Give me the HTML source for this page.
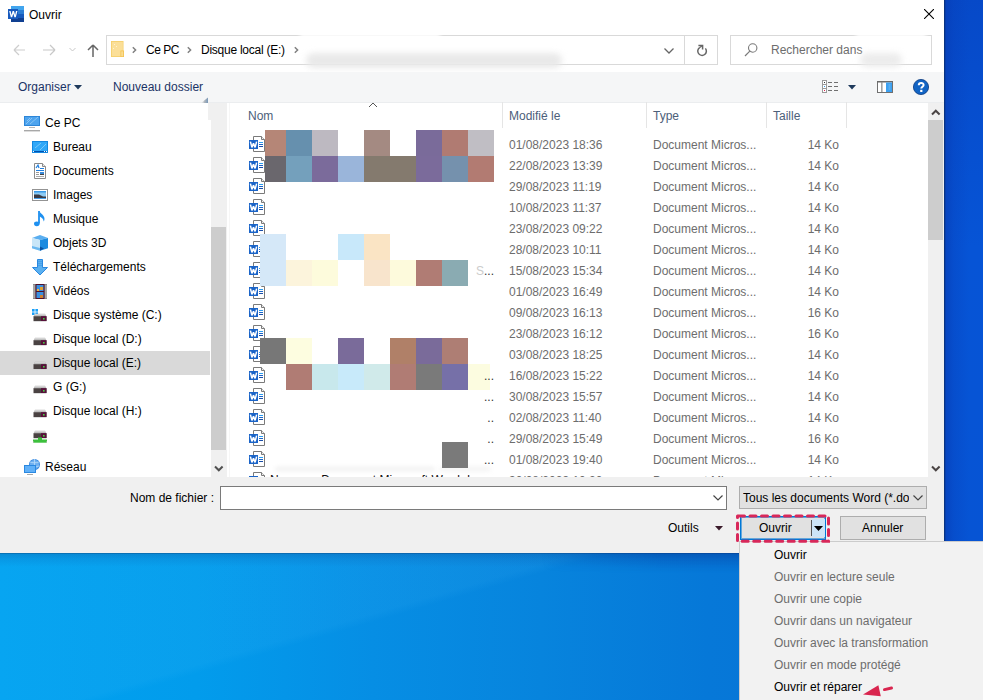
<!DOCTYPE html>
<html><head><meta charset="utf-8">
<style>
*{margin:0;padding:0;box-sizing:border-box}
html,body{width:983px;height:700px;overflow:hidden;font-family:"Liberation Sans",sans-serif;font-size:12px;color:#000}
body{position:relative;background:#0a4fd0}
.abs{position:absolute}
#desk{left:0;top:553px;width:983px;height:147px;background:linear-gradient(180deg,rgba(10,40,90,.6) 0,rgba(10,50,120,.22) 1px,rgba(10,60,140,.12) 6px,rgba(0,0,0,0) 14px),linear-gradient(163.7deg,rgba(90,200,255,.08) 0%,rgba(90,200,255,.08) 39%,rgba(0,0,0,0) 41%),linear-gradient(90deg,#00a2f0 0%,#029cec 20%,#068ee4 38%,#0784dd 55%,#0678d8 72%,#0670d4 100%)}
#desktop2{left:540px;top:553px;width:443px;height:30px;background:linear-gradient(180deg,rgba(0,20,140,.18) 0,rgba(0,20,140,0) 20px);-webkit-mask-image:linear-gradient(90deg,transparent 0,#000 120px)}
#deskr{left:944px;top:0;width:39px;height:553px;background:linear-gradient(90deg,#0a2f70 0,rgba(8,60,180,.6) 2px,rgba(8,60,180,.25) 10px,rgba(8,60,180,0) 25px),linear-gradient(175deg,#0649c8 0%,#0654d6 45%,#0654d4 100%)}
#dlg{left:0;top:0;width:944px;height:553px;background:#fff;overflow:hidden}
.t{position:absolute;white-space:nowrap;line-height:14px}
#toolbar{left:0;top:72px;width:944px;height:31px;background:#f5f6f7;border-bottom:1px solid #ebedef}
#bottom{left:0;top:477px;width:944px;height:76px;background:#f0f0f0}
.nv{position:absolute;white-space:nowrap;line-height:14px;color:#000}
.d{position:absolute;left:509px;color:#6d6d6d;white-space:nowrap;line-height:14px}
.ty{position:absolute;left:653px;color:#6d6d6d;white-space:nowrap;line-height:14px}
.sz{position:absolute;left:770px;width:69px;text-align:right;color:#6d6d6d;white-space:nowrap;line-height:14px}
.hd{position:absolute;top:109px;color:#4c607a;white-space:nowrap;line-height:14px}
.sep{position:absolute;top:102px;width:1px;height:26px;background:#e5e5e5}
.mi{position:absolute;left:774px;white-space:nowrap;line-height:14px;color:#6d6d6d}
.wi{position:absolute;left:249px}
.mb{position:absolute;width:26px;height:26px}
</style></head><body>
<div id="desk" class="abs"></div>
<div id="deskr" class="abs"></div>
<div id="desktop2" class="abs"></div>
<svg width="0" height="0" style="position:absolute"><defs><g id="wicon">
<path d="M4.5 0.5h8l3 3v12h-11z" fill="#fff" stroke="#7a7a7a"/>
<path d="M12.5 0.5v3h3" fill="#eee" stroke="#7a7a7a"/>
<rect x="0" y="4" width="9" height="9" fill="#1a64c8"/>
<path d="M1.4 5.6L2.9 11.4L4.5 7.4L6.1 11.4L7.6 5.6" stroke="#fff" stroke-width="1.5" fill="none" stroke-linejoin="miter" stroke-miterlimit="2"/>
<rect x="10" y="6" width="4" height="1" fill="#2b9cf0"/>
<rect x="10" y="8" width="4" height="1" fill="#1a64c8"/>
<rect x="10" y="10" width="4" height="1" fill="#1a4ea8"/>
</g></defs></svg>
<div id="dlg" class="abs">
  <!-- title -->
  <svg class="abs" style="left:0;top:0" width="30" height="30">
    <rect x="11" y="6" width="13" height="4" fill="#41a5ee"/>
    <rect x="11" y="10" width="13" height="4" fill="#2b7cd3"/>
    <rect x="11" y="14" width="13" height="4" fill="#185abd"/>
    <rect x="11" y="18" width="13" height="4" fill="#103f91"/>
    <rect x="8" y="9" width="10" height="10" fill="#185abd"/>
    <path d="M9.2 11l1.6 6.2h1.4l1.1-3.8 1.1 3.8h1.4l1.6-6.2h-1.4l-0.9 3.9-1.1-3.9h-1.4l-1.1 3.9-0.9-3.9z" fill="#fff"/>
  </svg>
  <div class="t" style="left:29px;top:8px">Ouvrir</div>
  <svg class="abs" style="left:924px;top:9px" width="10" height="10"><path d="M0 0L10 10M10 0L0 10" stroke="#000" stroke-width="1.1"/></svg>

  <!-- nav buttons -->
  <svg class="abs" style="left:10px;top:42px" width="95" height="18">
    <path d="M4 8h11M4 8l5-5M4 8l5 5" stroke="#cdcdcd" stroke-width="1.2" fill="none"/>
    <path d="M33 8h12M45 8l-5-5M45 8l-5 5" stroke="#c8c8c8" stroke-width="1.2" fill="none"/>
    <path d="M59.5 6l3 3 3-3" stroke="#c8c8c8" stroke-width="1" fill="none"/>
    <path d="M83 3v12M83 3l-5 5M83 3l5 5" stroke="#666" stroke-width="1.5" fill="none"/>
  </svg>
  <!-- address box -->
  <div class="abs" style="left:106px;top:35px;width:612px;height:30px;border:1px solid #d9d9d9"></div>
  <div class="abs" style="left:684px;top:35px;width:1px;height:30px;background:#d9d9d9"></div>
  <svg class="abs" style="left:111px;top:41px" width="14" height="16"><rect x="0" y="0" width="12.5" height="16" fill="#f6cf6a"/><rect x="0.8" y="0.8" width="11" height="14.4" fill="#fbdf98"/><rect x="9.5" y="9.5" width="3.5" height="6.5" fill="#f3c24e"/><rect x="10.2" y="10.3" width="2" height="5" fill="#fbdc90"/><rect x="3" y="3" width="1" height="1" fill="#fff3d0"/><rect x="5" y="5" width="1" height="1" fill="#fff3d0"/><rect x="2" y="7" width="1" height="1" fill="#fff3d0"/></svg>
  <svg class="abs" style="left:130px;top:45px" width="170" height="10">
    <path d="M2.8 2.2l2.8 2.8-2.8 2.8" stroke="#808080" stroke-width="1.5" fill="none"/>
    <path d="M57.8 2.2l2.8 2.8-2.8 2.8" stroke="#808080" stroke-width="1.5" fill="none"/>
    <path d="M164.8 2.2l2.8 2.8-2.8 2.8" stroke="#808080" stroke-width="1.5" fill="none"/>
  </svg>
  <div class="t" style="left:146px;top:43px;letter-spacing:-0.5px">Ce PC</div>
  <div class="t" style="left:201px;top:43px;letter-spacing:-0.25px">Disque local (E:)</div>
  <div class="abs" style="left:300px;top:33px;width:140px;height:6px;background:#fff;filter:blur(2px)"></div><div class="abs" style="left:306px;top:53px;width:256px;height:15px;border-radius:8px;background:#e9e9e9;filter:blur(3px)"></div>
  <svg class="abs" style="left:663px;top:47px" width="12" height="8"><path d="M1.5 1.5l4.5 4.5 4.5-4.5" stroke="#666" stroke-width="1.3" fill="none"/></svg>
  <svg class="abs" style="left:696px;top:44px" width="13" height="13"><path d="M3.6 3.6A4.3 4.3 0 1 0 9.4 4.4" stroke="#666" stroke-width="1.5" fill="none"/><path d="M2.4 1.5H6.6V5.6" stroke="#666" stroke-width="1.5" fill="none"/><path d="M3.4 3.8L6.2 1.8" stroke="#666" stroke-width="1.2"/></svg>
  <!-- search -->
  <div class="abs" style="left:730px;top:35px;width:202px;height:30px;border:1px solid #d9d9d9"></div>
  <svg class="abs" style="left:744px;top:42px" width="14" height="15"><circle cx="8.7" cy="6" r="4.2" stroke="#7a7a7a" stroke-width="1.1" fill="none"/><path d="M5.8 9.2L1 14" stroke="#7a7a7a" stroke-width="1.2"/></svg>
  <div class="t" style="left:771px;top:43px;color:#6d6d6d">Rechercher dans</div>
  <div class="abs" style="left:856px;top:33px;width:70px;height:6px;background:#fff;filter:blur(2px)"></div><div class="abs" style="left:860px;top:53px;width:42px;height:14px;border-radius:7px;background:#ececec;filter:blur(3px)"></div>

  <!-- toolbar -->
  <div id="toolbar" class="abs"></div>
  <div class="t" style="left:18px;top:80px;color:#1a3366">Organiser</div>
  <svg class="abs" style="left:74px;top:85px" width="9" height="6"><path d="M0 0h8l-4 4.5z" fill="#1e395b"/></svg>
  <div class="t" style="left:113px;top:80px;color:#1a3366">Nouveau dossier</div>
  <!-- view icon -->
  <svg class="abs" style="left:822px;top:80px" width="17" height="13">
    <rect x="0.5" y="0.5" width="4" height="12" fill="#fff" stroke="#9a9a9a"/>
    <path d="M0.5 4.5h4M0.5 8.5h4" stroke="#9a9a9a"/>
    <rect x="2" y="2" width="1" height="1" fill="#333"/>
    <rect x="2" y="6" width="1" height="1" fill="#2f9ae8"/>
    <rect x="2" y="10" width="1" height="1" fill="#e02050"/>
    <path d="M6 2.5h4M12 2.5h4M6 6.5h4M12 6.5h4M6 10.5h4M12 10.5h4" stroke="#707070" stroke-width="1"/>
  </svg>
  <svg class="abs" style="left:848px;top:85px" width="9" height="6"><path d="M0 0h8l-4 4.5z" fill="#1e395b"/></svg>
  <svg class="abs" style="left:877px;top:81px" width="16" height="12">
    <rect x="0.5" y="0.5" width="15" height="11" fill="#fff" stroke="#707070"/>
    <rect x="0" y="0" width="16" height="1.5" fill="#6a6a6a"/>
    <rect x="4.2" y="1" width="1.3" height="10" fill="#909090"/>
    <rect x="9" y="1.5" width="6" height="9.5" fill="#3ca0f0"/>
    <path d="M11.5 4h2M11.5 6h2M11.5 8h2" stroke="#8cc8f8" stroke-width="0.7"/>
  </svg>
  <svg class="abs" style="left:913px;top:79px" width="16" height="16"><circle cx="8" cy="8" r="7.6" fill="#1264c4" stroke="#0a3a80" stroke-width="0.8"/><path d="M5.8 6.2C5.8 3.2 10.6 3.2 10.6 6C10.6 7.6 8.3 7.9 8.3 9.6" stroke="#fff" stroke-width="2" fill="none"/><rect x="7.2" y="10.8" width="2.2" height="2.2" fill="#fff"/></svg>

  <!-- nav pane -->
  <div class="abs" style="left:211px;top:103px;width:16px;height:374px;background:#f0f0f0"></div><div class="abs" style="left:208px;top:103px;width:19px;height:17px;background:#f0f0f0"></div><div class="abs" style="left:229px;top:103px;width:1px;height:374px;background:#f6f6f6"></div><svg class="abs" style="left:198px;top:94px" width="12" height="10"><defs><linearGradient id="ag" x1="0" y1="0" x2="1" y2="0"><stop offset="0" stop-color="#d8d8d8" stop-opacity="0"/><stop offset="0.5" stop-color="#a0a8b0"/><stop offset="1" stop-color="#5a80a8"/></linearGradient></defs><path d="M3 9L10 3.5V9z" fill="url(#ag)" opacity="0.8"/></svg>
  <div class="abs" style="left:211px;top:227px;width:15px;height:223px;background:#cdcdcd"></div>
  <svg class="abs" style="left:214px;top:465px" width="10" height="8"><path d="M1 1.5l3.8 3.8 3.8-3.8" stroke="#505050" stroke-width="2" fill="none"/></svg>
  <div class="abs" style="left:0;top:351px;width:210px;height:24px;background:#d9d9d9"></div>

  <svg class="abs" style="left:0;top:102px" width="210" height="375" viewBox="0 102 210 375">
<defs>
 <g id="drv">
  <path d="M1.5 3.4L3 0.8h10l1.5 2.6z" fill="#bdbdbd"/><path d="M3 1.6h10" stroke="#dedede" stroke-width="0.8"/>
  <rect x="1.5" y="3.2" width="13" height="4.8" fill="#4a4242"/>
  <rect x="9" y="3.2" width="5.5" height="4.8" fill="#58103a"/>
  <rect x="11" y="5" width="1.6" height="1.6" fill="#44d044"/>
  <rect x="1.5" y="8" width="13" height="0.6" fill="#c8c8c8"/>
 </g>
</defs>
<!-- Ce PC -->
<rect x="24" y="116" width="16" height="10" fill="#2d86d8"/>
<rect x="25" y="117" width="14" height="8" fill="#4ea4ee"/>
<path d="M26 124l6-6M30 124l8-7M27 121l3-3" stroke="#88c4f6" stroke-width="1"/>
<rect x="29" y="127" width="6" height="1" fill="#b8b8b8"/>
<rect x="24" y="130" width="16" height="1.4" fill="#a8a8a8"/>
<!-- Bureau -->
<rect x="32" y="141" width="16" height="12" fill="#1488e0"/>
<rect x="33" y="142" width="14" height="9" fill="#30a8f8"/>
<path d="M35 148l6-5M40 150l6-6" stroke="#78c8fa" stroke-width="1"/>
<rect x="33" y="151" width="14" height="1" fill="#0050b0"/>
<rect x="33" y="151" width="1" height="1" fill="#fff"/><rect x="44" y="151" width="1" height="1" fill="#fff"/><rect x="46" y="151" width="1" height="1" fill="#fff"/>
<!-- Documents -->
<path d="M34.5 163.5h8l3 3v12h-11z" fill="#fff" stroke="#8a8a8a"/>
<path d="M42.5 163.5v3h3" fill="#e8e8e8" stroke="#8a8a8a"/>
<path d="M36 168l2-3 1 3" stroke="#2080e0" stroke-width="1.2" fill="none"/>
<rect x="40" y="168" width="4" height="1" fill="#2080e0"/>
<rect x="36" y="170" width="8" height="1" fill="#2080e0"/>
<rect x="36" y="172" width="3" height="1" fill="#999"/><rect x="40" y="172" width="4" height="2" fill="#3a8ad8"/>
<rect x="36" y="174" width="3" height="1" fill="#999"/><rect x="40" y="174" width="4" height="1" fill="#444"/>
<rect x="36" y="176" width="8" height="1" fill="#aaa"/>
<!-- Images -->
<rect x="32.5" y="189.5" width="15" height="11" fill="#fff" stroke="#939393"/>
<rect x="34" y="191" width="12" height="8" fill="#8ccaf4"/>
<rect x="34" y="191" width="12" height="1.5" fill="#3a9ae8"/>
<path d="M34 194.5h5l4 2h3v1.5h-12z" fill="#3a3a44"/>
<rect x="34" y="198" width="12" height="1" fill="#4aa0ea"/>
<!-- Musique -->
<path d="M39 211v12.5" stroke="#1e90f0" stroke-width="1.8"/>
<ellipse cx="36.8" cy="223.8" rx="2.8" ry="2.4" fill="#1e90f0"/>
<path d="M39.5 211.5c1 2 5 3.5 5 7.5c0 1-0.4 2-0.8 2.6c0-3-2.5-4.5-4.2-5.2z" fill="#1e90f0"/>
<!-- Objets 3D -->
<path d="M32 238l8-3 8 3-8 2z" fill="#5aaef0"/>
<path d="M32 238l8 2v10.7l-8-2.5z" fill="#c8e6f8"/>
<path d="M32 246l8 2v2.7l-8-2.5z" fill="#6ab8f0"/>
<path d="M48 238l-8 2v10.7l8-2.5z" fill="#1a8ae0"/>
<path d="M40 246.5l4 2-4 2.2z" fill="#0a50a0"/>
<!-- Telechargements -->
<path d="M37.5 259.5h5v8h5l-7.5 7.5-7.5-7.5h5z" fill="#5ab0f0" stroke="#2a88e0" stroke-width="1"/>
<path d="M39 261v1M41 261v1M39 263v1M41 263v1M39 265v1M41 265v1" stroke="#2a88e0" stroke-width="0.8"/>
<!-- Videos -->
<rect x="33" y="284" width="14" height="15" fill="#8a8a8a"/>
<rect x="35.5" y="284" width="9" height="15" fill="#50102a"/>
<path d="M34 285.5v12.5M46 285.5v12.5" stroke="#fff" stroke-width="1" stroke-dasharray="1 1"/>
<rect x="36.5" y="285" width="7" height="6" fill="#3a90e0"/>
<rect x="36.5" y="292" width="7" height="6" fill="#3a90e0"/>
<rect x="40" y="287" width="3" height="3" fill="#e0a030"/><rect x="37" y="289" width="2" height="2" fill="#f0b040"/>
<rect x="40" y="295" width="3" height="3" fill="#d08030"/>
<!-- Drive C -->
<rect x="32" y="309" width="2.6" height="2.6" fill="#1aa0f8"/><rect x="35.4" y="309" width="2.6" height="2.6" fill="#1aa0f8"/>
<rect x="32" y="312.4" width="2.6" height="2.6" fill="#1aa0f8"/><rect x="35.4" y="312.4" width="2.6" height="2.6" fill="#1aa0f8"/>
<use href="#drv" x="32" y="313"/>
<use href="#drv" x="32" y="337"/>
<use href="#drv" x="32" y="361"/>
<use href="#drv" x="32" y="385"/>
<use href="#drv" x="32" y="409"/>
<!-- Network drive -->
<use href="#drv" x="32" y="430"/>
<rect x="33" y="439.5" width="14" height="3.2" fill="#3cc03c"/>
<rect x="38" y="437.5" width="4" height="2.5" fill="#3cc03c"/>
<rect x="33" y="441.5" width="1" height="1.2" fill="#bbb"/><rect x="46" y="441.5" width="1" height="1.2" fill="#bbb"/>
<!-- Reseau -->
<circle cx="34.5" cy="464.5" r="5.5" fill="#3a8ae0"/>
<circle cx="34.5" cy="464.5" r="4.5" fill="#70b0f0"/>
<path d="M30 462c2 1 6 1 9 0M30 466c2 1 6 1 9 0M34.5 459v11" stroke="#b8dcfa" stroke-width="0.8" fill="none"/>
<rect x="24" y="465" width="12" height="8" fill="#2a88e0"/>
<rect x="25" y="466" width="10" height="6" fill="#60b0f8"/>
<rect x="27" y="474" width="6" height="1" fill="#aaa"/>
</svg>


  <div class="nv" style="left:45px;top:116px">Ce PC</div>
  <div class="nv" style="left:53px;top:140px">Bureau</div>
  <div class="nv" style="left:53px;top:164px">Documents</div>
  <div class="nv" style="left:53px;top:188px">Images</div>
  <div class="nv" style="left:53px;top:212px">Musique</div>
  <div class="nv" style="left:53px;top:236px">Objets 3D</div>
  <div class="nv" style="left:53px;top:260px">Téléchargements</div>
  <div class="nv" style="left:53px;top:284px">Vidéos</div>
  <div class="nv" style="left:53px;top:308px">Disque système (C:)</div>
  <div class="nv" style="left:53px;top:332px">Disque local (D:)</div>
  <div class="nv" style="left:53px;top:356px">Disque local (E:)</div>
  <div class="nv" style="left:53px;top:380px">G (G:)</div>
  <div class="nv" style="left:53px;top:404px">Disque local (H:)</div>
  <div class="nv" style="left:45px;top:460px">Réseau</div>

  <!-- file list header -->
  <div class="sep" style="left:502px"></div>
  <div class="sep" style="left:646px"></div>
  <div class="sep" style="left:766px"></div>
  <div class="sep" style="left:846px"></div>
  <div class="hd" style="left:248px">Nom</div>
  <div class="hd" style="left:509px">Modifié le</div>
  <div class="hd" style="left:653px">Type</div>
  <div class="hd" style="left:773px">Taille</div>
  <svg class="abs" style="left:368px;top:102px" width="10" height="6"><path d="M1 5l4-4 4 4" stroke="#555" stroke-width="1" fill="none"/></svg>

  <!--ROWS-->
<div class="abs" style="left:275px;top:467px;width:160px;height:4px;background:#f0f0f0;filter:blur(2px);border-radius:2px"></div><div class="abs" style="left:440px;top:467px;width:50px;height:4px;background:#f2f2f2;filter:blur(2px)"></div>

<svg class="wi" style="top:136px" width="17" height="16"><use href="#wicon"/></svg>
<div class="d" style="top:138px">01/08/2023 18:36</div><div class="ty" style="top:138px">Document Micros...</div><div class="sz" style="top:138px">14 Ko</div>
<svg class="wi" style="top:157px" width="17" height="16"><use href="#wicon"/></svg>
<div class="d" style="top:159px">22/08/2023 13:39</div><div class="ty" style="top:159px">Document Micros...</div><div class="sz" style="top:159px">14 Ko</div>
<svg class="wi" style="top:178px" width="17" height="16"><use href="#wicon"/></svg>
<div class="d" style="top:180px">29/08/2023 11:19</div><div class="ty" style="top:180px">Document Micros...</div><div class="sz" style="top:180px">14 Ko</div>
<svg class="wi" style="top:199px" width="17" height="16"><use href="#wicon"/></svg>
<div class="d" style="top:201px">10/08/2023 11:37</div><div class="ty" style="top:201px">Document Micros...</div><div class="sz" style="top:201px">14 Ko</div>
<svg class="wi" style="top:220px" width="17" height="16"><use href="#wicon"/></svg>
<div class="d" style="top:222px">23/08/2023 09:22</div><div class="ty" style="top:222px">Document Micros...</div><div class="sz" style="top:222px">14 Ko</div>
<svg class="wi" style="top:241px" width="17" height="16"><use href="#wicon"/></svg>
<div class="d" style="top:243px">28/08/2023 10:11</div><div class="ty" style="top:243px">Document Micros...</div><div class="sz" style="top:243px">14 Ko</div>
<svg class="wi" style="top:262px" width="17" height="16"><use href="#wicon"/></svg>
<div class="d" style="top:264px">15/08/2023 15:34</div><div class="ty" style="top:264px">Document Micros...</div><div class="sz" style="top:264px">14 Ko</div>
<svg class="wi" style="top:283px" width="17" height="16"><use href="#wicon"/></svg>
<div class="d" style="top:285px">01/08/2023 16:49</div><div class="ty" style="top:285px">Document Micros...</div><div class="sz" style="top:285px">14 Ko</div>
<svg class="wi" style="top:304px" width="17" height="16"><use href="#wicon"/></svg>
<div class="d" style="top:306px">09/08/2023 16:13</div><div class="ty" style="top:306px">Document Micros...</div><div class="sz" style="top:306px">16 Ko</div>
<svg class="wi" style="top:325px" width="17" height="16"><use href="#wicon"/></svg>
<div class="d" style="top:327px">23/08/2023 16:12</div><div class="ty" style="top:327px">Document Micros...</div><div class="sz" style="top:327px">16 Ko</div>
<svg class="wi" style="top:346px" width="17" height="16"><use href="#wicon"/></svg>
<div class="d" style="top:348px">03/08/2023 18:25</div><div class="ty" style="top:348px">Document Micros...</div><div class="sz" style="top:348px">14 Ko</div>
<svg class="wi" style="top:367px" width="17" height="16"><use href="#wicon"/></svg>
<div class="d" style="top:369px">16/08/2023 15:22</div><div class="ty" style="top:369px">Document Micros...</div><div class="sz" style="top:369px">14 Ko</div>
<svg class="wi" style="top:388px" width="17" height="16"><use href="#wicon"/></svg>
<div class="d" style="top:390px">30/08/2023 15:57</div><div class="ty" style="top:390px">Document Micros...</div><div class="sz" style="top:390px">14 Ko</div>
<svg class="wi" style="top:409px" width="17" height="16"><use href="#wicon"/></svg>
<div class="d" style="top:411px">02/08/2023 11:40</div><div class="ty" style="top:411px">Document Micros...</div><div class="sz" style="top:411px">14 Ko</div>
<svg class="wi" style="top:430px" width="17" height="16"><use href="#wicon"/></svg>
<div class="d" style="top:432px">29/08/2023 15:49</div><div class="ty" style="top:432px">Document Micros...</div><div class="sz" style="top:432px">16 Ko</div>
<svg class="wi" style="top:451px" width="17" height="16"><use href="#wicon"/></svg>
<div class="d" style="top:453px">01/08/2023 19:40</div><div class="ty" style="top:453px">Document Micros...</div><div class="sz" style="top:453px">14 Ko</div>
<svg class="wi" style="top:472px" width="17" height="16"><use href="#wicon"/></svg>
<div class="d" style="top:474px">30/08/2023 10:20</div><div class="ty" style="top:474px">Document Micros...</div><div class="sz" style="top:474px">14 Ko</div>
<div class="t" style="left:270px;top:473px;color:#111">Nouveau Document Microsoft Word.docx</div>
<div class="mb" style="left:265px;top:130px;width:21px;background:#b58677"></div>
<div class="mb" style="left:286px;top:130px;width:26px;background:#6690ae"></div>
<div class="mb" style="left:312px;top:130px;width:26px;background:#bdb9c1"></div>
<div class="mb" style="left:364px;top:130px;width:26px;background:#a48a82"></div>
<div class="mb" style="left:416px;top:130px;width:26px;background:#7a6b9a"></div>
<div class="mb" style="left:442px;top:130px;width:26px;background:#b07b72"></div>
<div class="mb" style="left:468px;top:130px;width:26px;background:#c0bec4"></div>
<div class="mb" style="left:265px;top:156px;width:21px;background:#6a676d"></div>
<div class="mb" style="left:286px;top:156px;width:26px;background:#74a0bc"></div>
<div class="mb" style="left:312px;top:156px;width:26px;background:#7b6b9b"></div>
<div class="mb" style="left:338px;top:156px;width:26px;background:#9ab5da"></div>
<div class="mb" style="left:364px;top:156px;width:26px;background:#847a6e"></div>
<div class="mb" style="left:390px;top:156px;width:26px;background:#847a6e"></div>
<div class="mb" style="left:416px;top:156px;width:26px;background:#7b6b9b"></div>
<div class="mb" style="left:442px;top:156px;width:26px;background:#7591ad"></div>
<div class="mb" style="left:468px;top:156px;width:26px;background:#b27b72"></div>
<div class="mb" style="left:260px;top:234px;width:26px;background:#d5e8f8"></div>
<div class="mb" style="left:338px;top:234px;width:26px;background:#c8e8fa"></div>
<div class="mb" style="left:364px;top:234px;width:26px;background:#fae4c4"></div>
<div class="mb" style="left:260px;top:260px;width:26px;background:#d5e8f8"></div>
<div class="mb" style="left:286px;top:260px;width:26px;background:#fcf4dc"></div>
<div class="mb" style="left:312px;top:260px;width:26px;background:#fdfbdc"></div>
<div class="mb" style="left:364px;top:260px;width:26px;background:#f8e4cc"></div>
<div class="mb" style="left:390px;top:260px;width:26px;background:#fdfadc"></div>
<div class="mb" style="left:416px;top:260px;width:26px;background:#b07c74"></div>
<div class="mb" style="left:442px;top:260px;width:26px;background:#8aabb2"></div>
<div class="mb" style="left:260px;top:338px;width:26px;background:#777777"></div>
<div class="mb" style="left:286px;top:338px;width:26px;background:#fdfde0"></div>
<div class="mb" style="left:338px;top:338px;width:26px;background:#7a6b9a"></div>
<div class="mb" style="left:390px;top:338px;width:26px;background:#b08068"></div>
<div class="mb" style="left:416px;top:338px;width:26px;background:#7a6b9a"></div>
<div class="mb" style="left:442px;top:338px;width:26px;background:#ae7e74"></div>
<div class="mb" style="left:286px;top:364px;width:26px;background:#b07c74"></div>
<div class="mb" style="left:312px;top:364px;width:26px;background:#c8e8ec"></div>
<div class="mb" style="left:338px;top:364px;width:26px;background:#c8eafa"></div>
<div class="mb" style="left:364px;top:364px;width:26px;background:#d0eaea"></div>
<div class="mb" style="left:390px;top:364px;width:26px;background:#b07c74"></div>
<div class="mb" style="left:416px;top:364px;width:26px;background:#7a7a7a"></div>
<div class="mb" style="left:442px;top:364px;width:26px;background:#7670a8"></div>
<div class="mb" style="left:468px;top:364px;width:22px;background:#fcfce0"></div>
<div class="mb" style="left:442px;top:442px;width:26px;background:#7a7a7a"></div>
<div class="t" style="left:454px;width:40px;text-align:right;top:264px;color:#333"><span style="color:#ccc">S</span>...</div>
<div class="t" style="left:454px;width:40px;text-align:right;top:369px;color:#333">...</div>
<div class="t" style="left:454px;width:40px;text-align:right;top:390px;color:#333">...</div>
<div class="t" style="left:454px;width:40px;text-align:right;top:411px;color:#333">..</div>
<div class="t" style="left:454px;width:40px;text-align:right;top:432px;color:#333">..</div>
<div class="t" style="left:454px;width:40px;text-align:right;top:453px;color:#333">...</div>
<!--/ROWS-->

  <!-- list scrollbar -->
  <div class="abs" style="left:928px;top:103px;width:16px;height:374px;background:#f0f0f0"></div>
  <div class="abs" style="left:928px;top:120px;width:15px;height:120px;background:#cdcdcd"></div>
  <svg class="abs" style="left:931px;top:108px" width="10" height="8"><path d="M1 6.5l3.8-3.8 3.8 3.8" stroke="#4a4444" stroke-width="2" fill="none"/></svg>
  <svg class="abs" style="left:931px;top:465px" width="10" height="8"><path d="M1 1.5l3.8 3.8 3.8-3.8" stroke="#4a4444" stroke-width="2" fill="none"/></svg>

  <!-- bottom panel -->
  <div id="bottom" class="abs"></div>
  <div class="t" style="left:130px;top:491px">Nom de fichier :</div>
  <div class="abs" style="left:220px;top:486px;width:507px;height:24px;background:#fff;border:1px solid #7a7a7a"></div>
  <svg class="abs" style="left:712px;top:494px" width="12" height="8"><path d="M1.5 1.5l4.5 4.5 4.5-4.5" stroke="#444" stroke-width="1.2" fill="none"/></svg>
  <div class="abs" style="left:739px;top:486px;width:188px;height:23px;background:#e1e1e1;border:1px solid #adadad"></div>
  <div class="t" style="left:743px;top:491px;width:166px;overflow:hidden">Tous les documents Word (*.do</div>
  <svg class="abs" style="left:912px;top:494px" width="12" height="8"><path d="M1.5 1.5l4.5 4.5 4.5-4.5" stroke="#444" stroke-width="1.2" fill="none"/></svg>
  <div class="t" style="left:668px;top:521px">Outils</div>
  <svg class="abs" style="left:715px;top:526px" width="9" height="6"><path d="M0 0h8l-4 4.5z" fill="#3a1a2a"/></svg>
  <div class="abs" style="left:740px;top:516px;width:86px;height:24px;background:#e1e1e1;border:1px solid #0078d7;box-shadow:inset 0 0 0 1px rgba(0,120,215,.55)"></div>
  <div class="abs" style="left:812px;top:519px;width:13px;height:18px;background:#cce4f7"></div>
  <div class="abs" style="left:811px;top:520px;width:1px;height:16px;background:#555"></div>
  <svg class="abs" style="left:814px;top:526px" width="10" height="6"><path d="M0 0h9l-4.5 5z" fill="#000"/></svg>
  <div class="t" style="left:759px;top:521px">Ouvrir</div>
  
  <div class="abs" style="left:840px;top:516px;width:86px;height:24px;background:#e1e1e1;border:1px solid #adadad"></div>
  <div class="t" style="left:862px;top:521px">Annuler</div>
</div>

<!-- menu -->
<div class="abs" style="left:739px;top:541px;width:260px;height:170px;background:#f2f2f2;border:1px solid #cccccc"></div>
<div class="mi" style="left:774px;top:548px;color:#000">Ouvrir</div>
<div class="mi" style="top:570px">Ouvrir en lecture seule</div>
<div class="mi" style="top:592px">Ouvrir une copie</div>
<div class="mi" style="top:614px">Ouvrir dans un navigateur</div>
<div class="mi" style="top:636px">Ouvrir avec la transformation</div>
<div class="mi" style="top:658px">Ouvrir en mode protégé</div>
<div class="mi" style="top:680px;color:#000">Ouvrir et réparer</div>
<svg class="abs" style="left:860px;top:682px" width="36" height="18"><path d="M3 12.4L18.4 3.3 20.8 14.2z" fill="#d9264f"/><path d="M24.5 7.6L31.5 6" stroke="#d9264f" stroke-width="3" stroke-linecap="round"/></svg>
<svg class="abs" style="left:730px;top:508px" width="110" height="42"><rect x="7.5" y="8" width="91" height="25.2" fill="none" stroke="#d8285a" stroke-width="3" stroke-dasharray="6 5.5" stroke-linecap="round" stroke-dashoffset="-1"/></svg>
</body></html>
